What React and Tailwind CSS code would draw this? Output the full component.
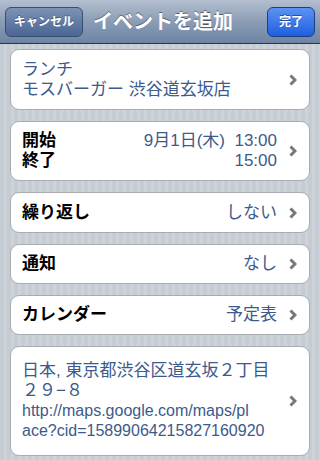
const FONT = { fontFamily: '"Liberation Sans", "Noto Sans CJK JP", sans-serif' }

function Chevron() {
  return (
    <svg width="8" height="12" viewBox="0 0 8 12" className="shrink-0">
      <polyline points="1.5,1.5 6,6 1.5,10.5" fill="none" stroke="#777" strokeWidth="3" />
    </svg>
  )
}

function Card({ h, className = '', children }) {
  return (
    <div className={`mx-[10px] bg-white border border-[#a9adb2] rounded-[9px] flex items-center pl-[11px] pr-[12px] ${h} ${className}`}>
      {children}
    </div>
  )
}

function Row({ label, value, h = 'h-[40px]' }) {
  return (
    <Card h={h}>
      <span className="flex-1 text-[17px] font-bold text-black">{label}</span>
      <span className="text-[17px] text-[#3d5a8c] mr-[12px]">{value}</span>
      <Chevron />
    </Card>
  )
}

export default function App() {
  return (
    <div style={FONT} className="w-[320px] h-[460px] overflow-hidden bg-[repeating-linear-gradient(90deg,#c5ccd4_0px,#c5ccd4_4px,#ccd3d9_4px,#ccd3d9_7px)]">
      <div className="h-[44px] flex items-center px-[5px] border-b border-[#2d3642] bg-gradient-to-b from-[#b3bfd0] via-[#8b9db5] to-[#6e84a2]">
        <button className="h-[30px] w-[78px] rounded-[6px] border border-[#3a4d6e] bg-gradient-to-b from-[#7d93b4] to-[#4a6694] text-white text-[12px] font-bold [text-shadow:0_-1px_0_rgba(0,0,0,0.4)]">
          キャンセル
        </button>
        <h1 className="ml-[10px] flex-1 text-white text-[20px] font-bold [text-shadow:0_-1px_0_rgba(0,0,0,0.45)]">
          イベントを追加
        </h1>
        <button className="h-[30px] w-[48px] rounded-[6px] border border-[#1f3d85] bg-gradient-to-b from-[#5b92f2] to-[#1f5ee0] text-white text-[12px] font-bold [text-shadow:0_-1px_0_rgba(0,0,0,0.4)]">
          完了
        </button>
      </div>

      <div className="flex flex-col gap-[11px] pt-[5px]">
        <Card h="h-[61px]">
          <div className="flex-1 text-[17px] leading-[20px] text-[#3d5a8c]">
            <div>ランチ</div>
            <div>モスバーガー 渋谷道玄坂店</div>
          </div>
          <Chevron />
        </Card>

        <Card h="h-[60px]">
          <div className="flex-1 text-[17px] leading-[20px] font-bold text-black">
            <div>開始</div>
            <div>終了</div>
          </div>
          <div className="text-right text-[17px] leading-[20px] text-[#3d5a8c] mr-[12px]">
            <div>9月1日(木)&nbsp;&nbsp;13:00</div>
            <div>15:00</div>
          </div>
          <Chevron />
        </Card>

        <Row label="繰り返し" value="しない" h="h-[41px]" />
        <Row label="通知" value="なし" />
        <Row label="カレンダー" value="予定表" />

        <Card h="h-[110px]">
          <div className="flex-1 text-[17px] leading-[20px] text-[#3d5a8c]">
            <div>日本, 東京都渋谷区道玄坂２丁目</div>
            <div>２９−８</div>
            <div className="text-[16px]">http://maps.google.com/maps/pl</div>
            <div className="text-[16px]">ace?cid=15899064215827160920</div>
          </div>
          <Chevron />
        </Card>
      </div>
    </div>
  )
}
